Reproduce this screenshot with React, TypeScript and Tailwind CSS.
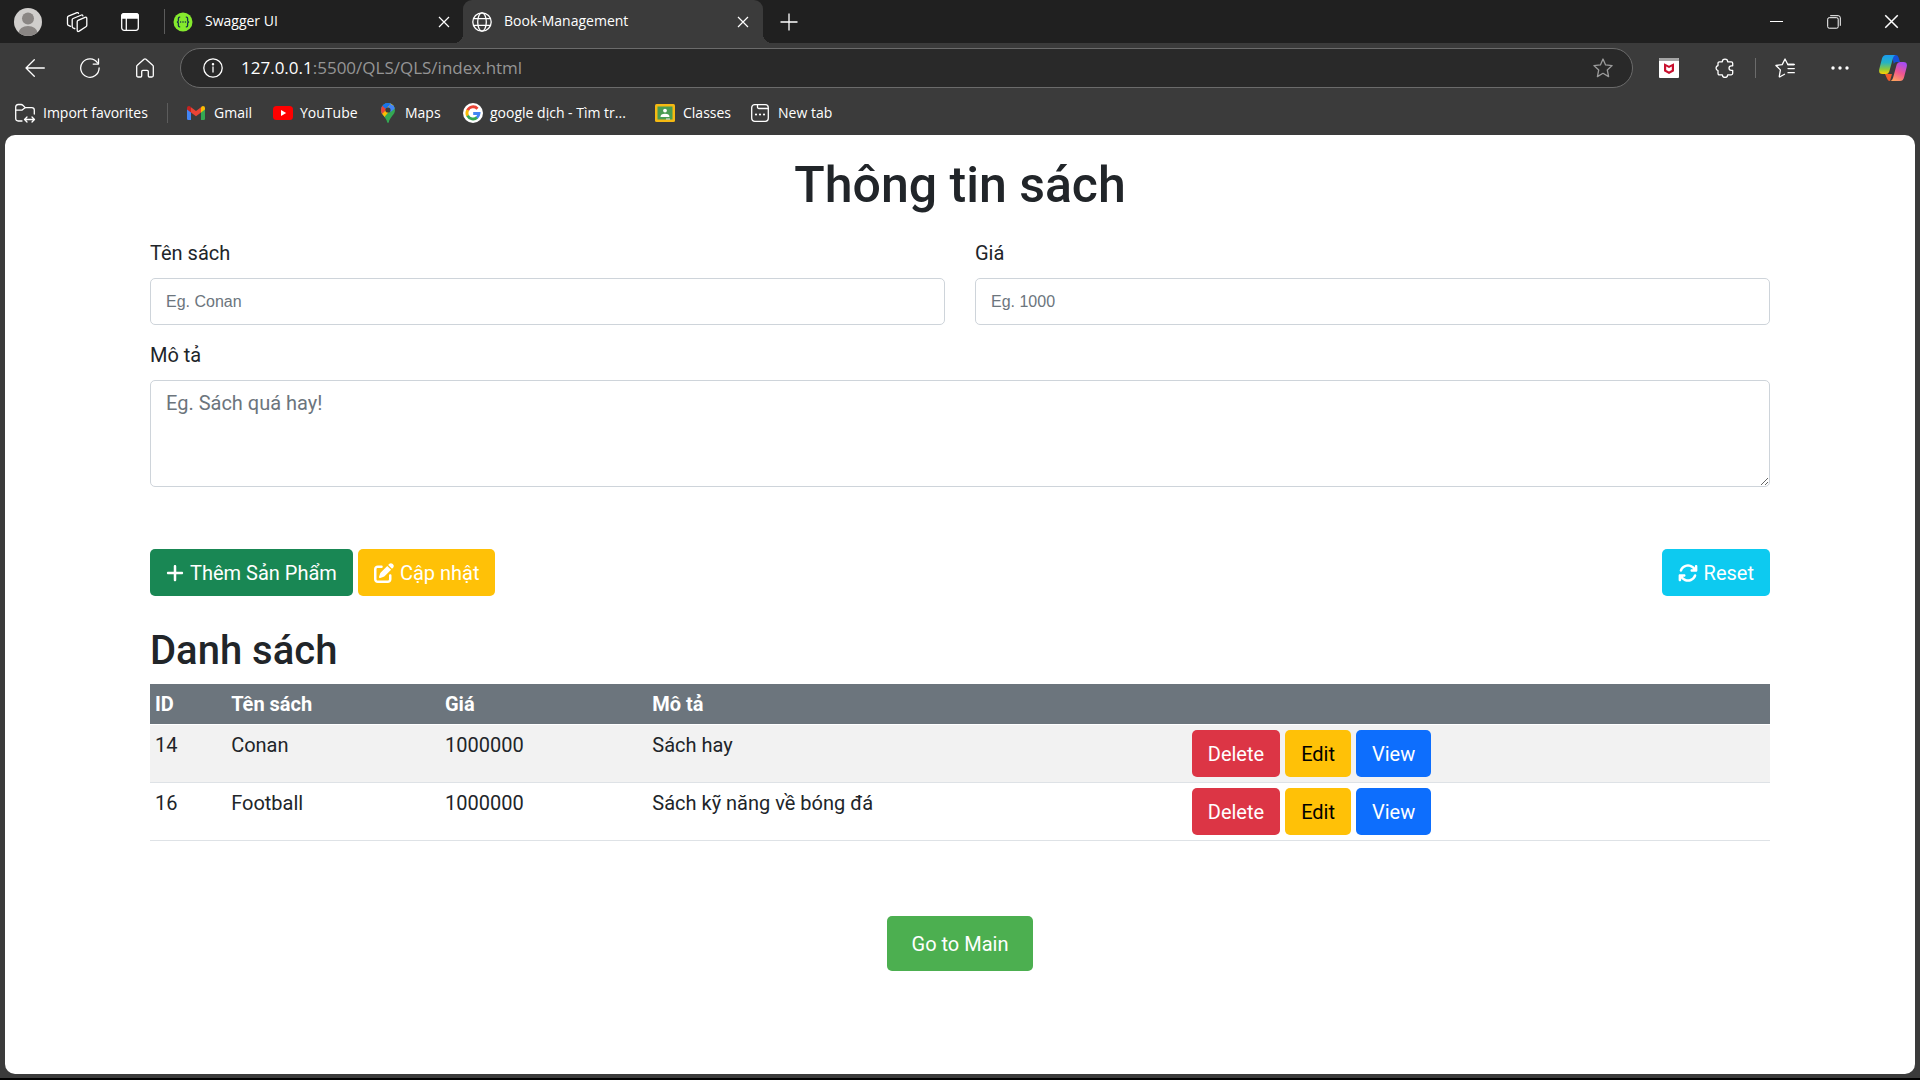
import type { ReactNode } from "react";
import { FaPlus, FaPenToSquare, FaArrowsRotate } from "react-icons/fa6";

/* ---------- Browser icons ---------- */

function Stroke({ size = 20, label, className = "", children }: { size?: number; label?: string; className?: string; children: ReactNode }) {
  return (
    <svg
      width={size}
      height={size}
      viewBox={`0 0 ${size} ${size}`}
      fill="none"
      stroke="currentColor"
      strokeWidth="1.3"
      strokeLinecap="round"
      strokeLinejoin="round"
      aria-hidden={label ? undefined : true}
      aria-label={label}
      className={`shrink-0 ${className}`}
    >
      {children}
    </svg>
  );
}

const Avatar = () => (
  <svg width="28" height="28" viewBox="0 0 28 28" aria-hidden="true" className="shrink-0">
    <defs>
      <clipPath id="avatar-disc">
        <circle cx="14" cy="14" r="14" />
      </clipPath>
    </defs>
    <g clipPath="url(#avatar-disc)">
      <rect width="28" height="28" fill="#d0cecc" />
      <circle cx="14" cy="10.5" r="6" fill="#8a8684" />
      <ellipse cx="14" cy="25" rx="9.5" ry="7" fill="#8a8684" />
    </g>
  </svg>
);

const Workspaces = () => (
  <Stroke size={22}>
    <path d="M11.200 10.800q0-1 .9-1.400l6.900-3q1.800-.7 1.800 1.200v6.700q0 1-.9 1.500l-6.700 4.300q-2 1.100-2-1z" />
    <path d="M8.800 17.700 7 16.900q-.8-.4-.8-1.300V8.800q0-.9.900-1.300L15.500 4q1.100-.4 1.400.8" />
    <path d="M4.600 15.300 2.400 14.300q-.9-.4-.9-1.300V6.500q0-.9.900-1.300L11 1.700q1.100-.4 1.500.7" />
  </Stroke>
);

const TabActions = () => (
  <Stroke size={20}>
    <rect x="1.700" y="1.700" width="16.600" height="16.600" rx="2.500" />
    <path d="M1.700 6V4.200q0-2.500 2.500-2.500h11.600q2.500 0 2.500 2.500V6z" fill="currentColor" />
    <path d="M6.300 6v12" />
  </Stroke>
);

const Swagger = () => (
  <svg width="20" height="20" viewBox="0 0 20 20" aria-hidden="true" className="shrink-0">
    <circle cx="10" cy="10" r="9.500" fill="#85ea2d" />
    <g fill="none" stroke="#173647" strokeWidth="1.300">
      <path d="M7.200 5.200H6.600Q5.400 5.200 5.400 6.600V8.500Q5.400 10 3.900 10 5.400 10 5.400 11.500v1.900q0 1.400 1.200 1.400h.6" />
      <path d="M12.800 5.200h.6q1.200 0 1.200 1.400v1.900q0 1.500 1.500 1.500-1.500 0-1.500 1.500v1.900q0 1.400-1.200 1.400h-.6" />
    </g>
    <g fill="#173647">
      <circle cx="7.600" cy="10" r=".8" />
      <circle cx="10" cy="10" r=".8" />
      <circle cx="12.400" cy="10" r=".8" />
    </g>
  </svg>
);

const Globe = () => (
  <Stroke size={20}>
    <circle cx="10" cy="10" r="9.200" />
    <ellipse cx="10" cy="10" rx="4.300" ry="9.200" />
    <path d="M1.600 6.700h16.800M1.600 13.300h16.800" />
  </Stroke>
);

const Cross = ({ size = 12 }: { size?: number }) => (
  <svg width={size} height={size} viewBox="0 0 12 12" fill="none" stroke="currentColor" strokeWidth="1.200" aria-hidden="true">
    <path d="M1 1l10 10M11 1L1 11" />
  </svg>
);

const Folder = () => (
  <Stroke size={22}>
    <path d="M8 19H4.200Q1.700 19 1.700 16.500V5q0-2.500 2.500-2.500h2.900q1 0 1.700.7L11.300 5.600h6.500q2.500 0 2.500 2.500v4" />
    <path d="M1.700 8.200h5.400q1 0 1.700-.7l2.500-1.900" />
    <path d="M10.500 17.500h10M13 15l-2.500 2.500L13 20M18 15l2.500 2.500L18 20" />
  </Stroke>
);

const Gmail = () => (
  <svg width="18" height="14" viewBox="0 0 18 14" aria-hidden="true" className="shrink-0">
    <path d="M0 2v10.800Q0 14 1.200 14H4V5z" fill="#4285f4" />
    <path d="M18 2v10.800q0 1.200-1.200 1.200H14V5z" fill="#34a853" />
    <path d="M14 1.200V6.400l4-3V2q0-1.900-2-1.900-.7 0-1.300.5z" fill="#fbbc04" />
    <path d="M4 1.200v5.200l5 3.800 5-3.800V1.200L9 5z" fill="#ea4335" />
    <path d="M0 2v1.400l4 3V1.200L3.300.6Q2.700.1 2 .1 0 .1 0 2z" fill="#c5221f" />
  </svg>
);

const YouTube = () => (
  <svg width="20" height="14" viewBox="0 0 20 14" aria-hidden="true" className="shrink-0">
    <rect width="20" height="14" rx="3.500" fill="#f00" />
    <path d="M8 4v6l5.200-3z" fill="#fff" />
  </svg>
);

const MapsPin = () => (
  <svg width="14" height="20" viewBox="0 0 14 20" aria-hidden="true" className="shrink-0">
    <defs>
      <clipPath id="maps-pin">
        <path d="M7 0a7 7 0 0 1 7 7c0 5-5 6.500-6.200 12.300q-.8 1.400-1.600 0C5 13.500 0 12 0 7a7 7 0 0 1 7-7z" />
      </clipPath>
    </defs>
    <g clipPath="url(#maps-pin)">
      <rect width="14" height="20" fill="#34a853" />
      <path d="M-2 12 9.500-1H16L3 14.500z" fill="#fbbc04" />
      <path d="M5 9 14 0v4L9 9z" fill="#4285f4" />
      <path d="M0 0h10.500L2 9.500-2 12z" fill="#1a73e8" />
      <path d="M-1 3h2.500l4 3.500L0 12z" fill="#ea4335" />
      <path d="M1.600 2.500 5 5.500 9.500 0H4z" fill="#1a73e8" />
      <path d="M9.300.4 14.500 5 9.500 9 7 5z" fill="#4285f4" />
    </g>
    <circle cx="7" cy="7" r="2.600" fill="#3b3b3b" />
  </svg>
);

const Google = () => (
  <svg width="20" height="20" viewBox="0 0 20 20" aria-hidden="true" className="shrink-0">
    <circle cx="10" cy="10" r="10" fill="#fff" />
    <g fill="none" strokeWidth="2.900">
      <path d="M14.500 5.700A6 6 0 0 0 4.600 7.300" stroke="#ea4335" />
      <path d="M4.700 7.100a6 6 0 0 0 0 5.800" stroke="#fbbc05" />
      <path d="M4.600 12.700a6 6 0 0 0 9.500 1.700" stroke="#34a853" />
      <path d="M13.900 14.600a6 6 0 0 0 2.100-4.100H10.200" stroke="#4285f4" />
    </g>
  </svg>
);

const Classroom = () => (
  <svg width="20" height="18" viewBox="0 0 20 18" aria-hidden="true" className="shrink-0">
    <rect width="20" height="18" rx="1.500" fill="#f5b912" />
    <rect x="2.500" y="2.500" width="15" height="13" fill="#4a9c53" />
    <circle cx="10" cy="6.600" r="1.900" fill="#fff" />
    <path d="M5.500 13q0-3.200 4.500-3.200t4.500 3.200z" fill="#fff" />
    <path d="M11 14.500h4v1h-4z" fill="#e8e8e8" />
  </svg>
);

const NewTab = () => (
  <Stroke size={20}>
    <rect x="1.700" y="1.700" width="16.600" height="16.600" rx="3" />
    <path d="M7.500 2v2q0 1.500 1.500 1.500h9" />
    <g fill="currentColor" stroke="none">
      <circle cx="6" cy="11.500" r="1.100" />
      <circle cx="10" cy="11.500" r="1.100" />
      <circle cx="14" cy="11.500" r="1.100" />
    </g>
  </Stroke>
);

const Back = () => (
  <Stroke size={20}>
    <path d="M19.300 10H1M9.300 1.700 1 10l8.300 8.300" />
  </Stroke>
);

const Refresh = () => (
  <Stroke size={20}>
    <path d="M19.100 10A9.200 9.200 0 1 1 17.600 5" />
    <path d="M18.500.8v5.300h-5.300" />
  </Stroke>
);

const Home = () => (
  <Stroke size={20}>
    <path d="M1.700 8.500q0-.8.600-1.300l6.700-6q1-.8 2 0l6.700 6q.6.500.6 1.300v9q0 1.500-1.500 1.500h-2.400q-1.100 0-1.100-1.100v-4.400q0-1.100-1.100-1.100H7.800q-1.100 0-1.100 1.100v4.400q0 1.100-1.100 1.100H3.200q-1.500 0-1.500-1.500z" />
  </Stroke>
);

const Info = () => (
  <Stroke size={20}>
    <circle cx="10" cy="10" r="9.200" />
    <path d="M10 9v5" />
    <circle cx="10" cy="6.200" r=".6" fill="currentColor" />
  </Stroke>
);

const Star = () => (
  <Stroke size={20}>
    <path d="M10 1 12.600 6.900 19.100 7.600 14.300 12l1.300 6.600L10 15.300l-5.600 3.300L5.700 12 .9 7.600l6.500-.7z" />
  </Stroke>
);

const McAfee = () => (
  <svg width="20" height="20" viewBox="0 0 20 20" aria-hidden="true" className="shrink-0">
    <rect width="20" height="20" rx="1" fill="#fff" />
    <path d="M0 1q0-1 1-1h18q1 0 1 1v2H0z" fill="#a5a5a5" />
    <path d="M5 5.200 10 7.700l5-2.500v8L10 16l-5-2.800zM7.200 8.600v3.400l2.800 1.500 2.800-1.500V8.600L10 10z" fill="#c8102e" fillRule="evenodd" />
  </svg>
);

const Puzzle = () => (
  <Stroke size={20}>
    <path d="M4.500 3.800h2.800a2.700 2.700 0 0 1 5.400 0h3.500q1.500 0 1.500 1.500v2.500h-1.400a2.300 2.300 0 0 0 0 4.600h1.400v2.900q0 1.500-1.500 1.500h-3.500a2.700 2.700 0 0 1-5.400 0H4.500Q3 16.800 3 15.300v-2.600a2.700 2.700 0 0 1 0-5.200V5.300q0-1.500 1.500-1.500z" />
  </Stroke>
);

const Favorites = () => (
  <Stroke size={20}>
    <path d="M18.800 6.500H12.800L10 1 7.200 6.600.9 7.500l4.500 4.400-1.100 6.400q-.1.900.7.500l4.500-2.500" />
    <path d="M12.700 6.500h6.600M13 10.600h6.300M13 14.700h6.300" />
  </Stroke>
);

const Dots = () => (
  <svg width="18" height="4" viewBox="0 0 18 4" fill="currentColor" aria-hidden="true">
    <circle cx="2" cy="2" r="1.700" />
    <circle cx="9" cy="2" r="1.700" />
    <circle cx="16" cy="2" r="1.700" />
  </svg>
);

const Copilot = () => (
  <svg width="28" height="26" viewBox="0 0 28 26" aria-hidden="true" className="shrink-0">
    <defs>
      <linearGradient id="cp-left" x1="0" y1="0" x2="0" y2="1">
        <stop offset="0" stopColor="#1a9bf0" />
        <stop offset=".4" stopColor="#26b3c4" />
        <stop offset=".75" stopColor="#8fc93a" />
        <stop offset="1" stopColor="#ffd000" />
      </linearGradient>
      <linearGradient id="cp-right" x1=".6" y1="0" x2=".2" y2="1">
        <stop offset="0" stopColor="#a84cf0" />
        <stop offset=".5" stopColor="#f0568f" />
        <stop offset="1" stopColor="#ffa45c" />
      </linearGradient>
    </defs>
    <path d="M13 0h3.500q2.300 0 3 2.200L21 7h-3.500q-2 0-2.700 2z" fill="#1650d8" />
    <path d="M6 19h7l-2 7Q8.800 26 8 23.500z" fill="#f0592b" />
    <path d="M7 0h9.500q-1.800.5-2.500 3l-3.700 13.500Q9.500 19 7 19H3.500Q-.8 19 .3 14L3 3.500Q4 0 7 0z" fill="url(#cp-left)" />
    <path d="M21 7h3.500q4.300 0 3.200 5L25 22.500Q24 26 21 26h-9.500q1.800-.5 2.500-3l3.700-13.500Q18.500 7 21 7z" fill="url(#cp-right)" />
  </svg>
);

/* ---------- Browser chrome ---------- */

function IconButton({ label, className = "", children }: { label: string; className?: string; children: ReactNode }) {
  return (
    <button type="button" aria-label={label} className={`flex shrink-0 items-center justify-center ${className}`}>
      {children}
    </button>
  );
}

function TabBar() {
  return (
    <div className="flex h-[43px] items-center bg-[#202020] pl-3.5">
      <IconButton label="Profile" className="w-7">
        <Avatar />
      </IconButton>
      <IconButton label="Workspaces" className="ml-6 w-[22px]">
        <Workspaces />
      </IconButton>
      <IconButton label="Tab actions" className="ml-8 w-5">
        <TabActions />
      </IconButton>
      <span className="ml-6 h-[25px] w-px bg-[#5c5c5c]" />
      <div className="flex h-full w-[298px] items-center bg-[#202020] pr-[11px] pl-2">
        <Swagger />
        <span className="ml-3 flex-1 pb-0.5">Swagger UI</span>
        <IconButton label="Close Swagger UI" className="w-4">
          <Cross />
        </IconButton>
      </div>
      <div className="relative flex h-full w-[300px] items-center rounded-t-[9px] bg-[#3b3b3b] pr-3 pl-[9px]">
        <span className="absolute bottom-0 -left-[9px] size-[9px] bg-[radial-gradient(circle_at_0_0,#202020_9px,#3b3b3b_9px)]" />
        <span className="absolute -right-[9px] bottom-0 size-[9px] bg-[radial-gradient(circle_at_100%_0,#202020_9px,#3b3b3b_9px)]" />
        <Globe />
        <span className="ml-3 flex-1 pb-0.5">Book-Management</span>
        <IconButton label="Close Book-Management" className="w-4">
          <Cross />
        </IconButton>
      </div>
      <IconButton label="New tab" className="ml-4 w-5">
        <svg width="18" height="18" viewBox="0 0 18 18" stroke="currentColor" strokeWidth="1.300" aria-hidden="true">
          <path d="M9 .5v17M.5 9h17" />
        </svg>
      </IconButton>
      <div className="ml-auto flex h-full">
        <IconButton label="Minimize" className="w-[57px]">
          <svg width="13" height="13" viewBox="0 0 13 13" stroke="currentColor" aria-hidden="true">
            <path d="M0 6.500h13" />
          </svg>
        </IconButton>
        <IconButton label="Restore" className="w-[57px]">
          <svg width="14" height="14" viewBox="0 0 14 14" fill="none" stroke="currentColor" aria-hidden="true">
            <rect x=".7" y="2.700" width="10.500" height="10.500" rx="1.500" />
            <path d="M3.200.7h8q2.100 0 2.100 2.100v8" />
          </svg>
        </IconButton>
        <IconButton label="Close window" className="w-[58px]">
          <Cross size={15} />
        </IconButton>
      </div>
    </div>
  );
}

function Toolbar() {
  return (
    <div className="flex h-[50px] items-center pr-[13px] pl-[25px]">
      <IconButton label="Back" className="w-5">
        <Back />
      </IconButton>
      <IconButton label="Refresh" className="ml-[35px] w-5">
        <Refresh />
      </IconButton>
      <IconButton label="Home" className="ml-[35px] w-5">
        <Home />
      </IconButton>
      <div className="ml-[25px] flex h-10 flex-1 items-center rounded-full border border-[#6b6b6b] bg-[#292929] pr-[19px] pl-[22px]">
        <Info />
        <a href="#index" className="ml-[18px] flex-1 text-[17px] leading-6 text-[#959595]">
          <span className="text-white">127.0.0.1</span>:5500/QLS/QLS/index.html
        </a>
        <IconButton label="Add to favorites" className="text-[#9b9b9b]">
          <Star />
        </IconButton>
      </div>
      <IconButton label="McAfee WebAdvisor" className="ml-[26px] w-5">
        <McAfee />
      </IconButton>
      <IconButton label="Extensions" className="ml-9 w-5">
        <Puzzle />
      </IconButton>
      <span className="ml-5 h-5 w-px bg-[#6b6b6b]" />
      <IconButton label="Favorites" className="ml-[19px] w-5">
        <Favorites />
      </IconButton>
      <IconButton label="Settings and more" className="ml-[35px] w-5">
        <Dots />
      </IconButton>
      <IconButton label="Copilot" className="ml-[29px] w-7">
        <Copilot />
      </IconButton>
    </div>
  );
}

function Bookmark({ icon, className, children }: { icon: ReactNode; className: string; children: ReactNode }) {
  return (
    <a href="#bookmark" className={`flex shrink-0 items-center whitespace-nowrap ${className}`}>
      {icon}
      <span>{children}</span>
    </a>
  );
}

function BookmarksBar() {
  return (
    <nav aria-label="Favorites bar" className="flex h-[42px] items-center pb-[3px] pl-3.5">
      <Bookmark icon={<Folder />} className="w-[153px] gap-[7px]">
        Import favorites
      </Bookmark>
      <span className="h-5 w-px bg-[#5c5c5c]" />
      <Bookmark icon={<Gmail />} className="ml-[19px] w-[86px] gap-[9px]">
        Gmail
      </Bookmark>
      <Bookmark icon={<YouTube />} className="w-[108px] gap-[7px]">
        YouTube
      </Bookmark>
      <Bookmark icon={<MapsPin />} className="w-[82px] gap-2.5">
        Maps
      </Bookmark>
      <Bookmark icon={<Google />} className="w-48 gap-[7px]">
        google dịch - Tìm tr...
      </Bookmark>
      <Bookmark icon={<Classroom />} className="w-[95px] gap-2">
        Classes
      </Bookmark>
      <Bookmark icon={<NewTab />} className="gap-2">
        New tab
      </Bookmark>
    </nav>
  );
}

/* ---------- Book management page ---------- */

const BUTTON = "inline-flex h-[47px] items-center gap-1.5 rounded-[5px] px-4 text-[20px] leading-[30px]";
const FIELD = "block w-full rounded-[5px] border border-[#ced4da] bg-white px-[15px] text-[#212529] placeholder:text-[#6c757d]";
const TEXT_INPUT = "h-[47px] pt-px font-['Liberation_Sans',Arial,sans-serif] text-[16px]";
const LABEL = "mb-2.5 block";

const BOOKS = [
  { id: 14, name: "Conan", price: 1000000, description: "Sách hay" },
  { id: 16, name: "Football", price: 1000000, description: "Sách kỹ năng về bóng đá" },
];

function BookForm() {
  return (
    <form>
      <div className="grid grid-cols-2 gap-x-[30px]">
        <div>
          <label htmlFor="name" className={LABEL}>
            Tên sách
          </label>
          <input id="name" type="text" placeholder="Eg. Conan" className={`${FIELD} ${TEXT_INPUT}`} />
        </div>
        <div>
          <label htmlFor="price" className={LABEL}>
            Giá
          </label>
          <input id="price" type="text" placeholder="Eg. 1000" className={`${FIELD} ${TEXT_INPUT}`} />
        </div>
      </div>
      <div className="mt-[15px]">
        <label htmlFor="description" className={LABEL}>
          Mô tả
        </label>
        <textarea id="description" rows={3} placeholder="Eg. Sách quá hay!" className={`${FIELD} pt-[7px] pb-2`} />
      </div>
      <div className="mt-[62px] flex gap-[5px]">
        <button type="button" className={`${BUTTON} bg-[#198754] text-white`}>
          <FaPlus aria-hidden="true" className="w-[18px]" />
          Thêm Sản Phẩm
        </button>
        <button type="button" className={`${BUTTON} bg-[#ffc107] text-white`}>
          <FaPenToSquare aria-hidden="true" />
          Cập nhật
        </button>
        <button type="reset" className={`${BUTTON} ml-auto bg-[#0dcaf0] text-white`}>
          <FaArrowsRotate aria-hidden="true" />
          Reset
        </button>
      </div>
    </form>
  );
}

function BookTable() {
  return (
    <table className="w-full table-fixed text-left">
      <colgroup>
        <col className="w-[4.7%]" />
        <col className="w-[13.2%]" />
        <col className="w-[12.8%]" />
        <col className="w-[33.3%]" />
        <col />
      </colgroup>
      <thead>
        <tr className="border-b border-white bg-[#6c757d] font-bold text-white">
          <th className="p-[5px]">ID</th>
          <th className="p-[5px]">Tên sách</th>
          <th className="p-[5px]">Giá</th>
          <th className="p-[5px]">Mô tả</th>
          <th className="p-[5px]" aria-label="Actions" />
        </tr>
      </thead>
      <tbody>
        {BOOKS.map((book) => (
          <tr key={book.id} className="border-b border-[#dee2e6] align-top odd:bg-[#f2f2f2]">
            <td className="p-[5px]">{book.id}</td>
            <td className="p-[5px]">{book.name}</td>
            <td className="p-[5px]">{book.price}</td>
            <td className="p-[5px]">{book.description}</td>
            <td className="p-[5px]">
              <div className="flex gap-[5px]">
                <button type="button" className={`${BUTTON} bg-[#dc3545] text-white`}>
                  Delete
                </button>
                <button type="button" className={`${BUTTON} bg-[#ffc107] text-black`}>
                  Edit
                </button>
                <button type="button" className={`${BUTTON} bg-[#0d6efd] text-white`}>
                  View
                </button>
              </div>
            </td>
          </tr>
        ))}
      </tbody>
    </table>
  );
}

export default function App() {
  return (
    <div className="flex min-h-screen flex-col border-b-2 border-black bg-[#3b3b3b] font-['Open_Sans','Noto_Sans',sans-serif] text-[14px] leading-5 text-white">
      <header>
        <TabBar />
        <Toolbar />
        <BookmarksBar />
      </header>
      <main className="mx-[5px] mb-1 flex-1 rounded-[10px] bg-white font-[Roboto,'Noto_Sans',sans-serif] text-[20px] leading-[30px] text-[#212529]">
        <div className="mx-auto max-w-[1650px] px-[15px] pt-5 pb-10">
          <h1 className="mb-[23px] text-center text-[50px] leading-[60px] font-medium">Thông tin sách</h1>
          <BookForm />
          <h2 className="mt-[31px] mb-[9px] text-[40px] leading-[48px] font-medium">Danh sách</h2>
          <BookTable />
          <div className="mt-[75px] flex justify-center">
            <a href="#main" className="flex h-[55px] items-center rounded-[5px] bg-[#4caf50] px-[25px] text-white">
              Go to Main
            </a>
          </div>
        </div>
      </main>
    </div>
  );
}
